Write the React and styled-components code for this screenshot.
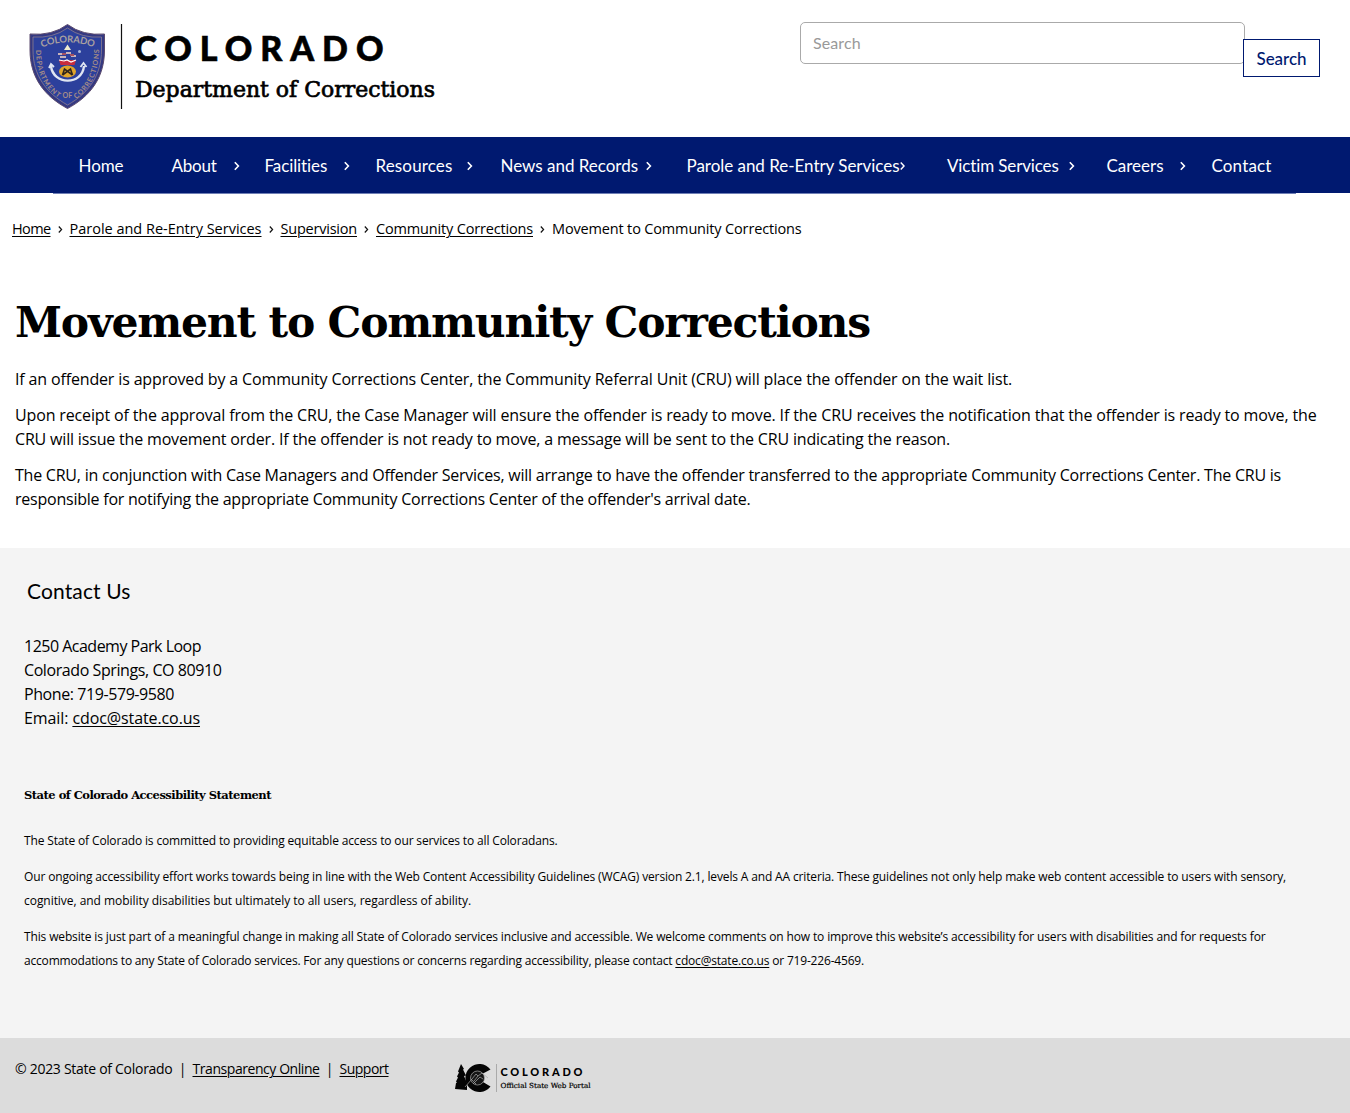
import React, { useLayoutEffect, useRef, useState } from "react";
import styled, { createGlobalStyle } from "styled-components";

const sans = `"Lato", "Open Sans", sans-serif`;
const body = `"Open Sans", "Noto Sans", sans-serif`;
const slab = `"DejaVu Serif", "Liberation Serif", serif`;

const GlobalStyle = createGlobalStyle`
  * { box-sizing: border-box; }
  body { margin: 0; background: #fff; color: #000; font-family: ${body}; font-stretch: 88%; font-size: 16px; line-height: 24px; }
  a { color: inherit; text-underline-offset: 1.5px; text-decoration-thickness: 1px; }
`;

const FitSpan = styled.span`
  display: inline-block;
  white-space: nowrap;
`;

/* Tracks its text so that it sets to a given measure. */
function Fit({ width, children }) {
  const ref = useRef(null);
  const [spacing, setSpacing] = useState(0);
  useLayoutEffect(() => {
    const el = ref.current;
    el.style.letterSpacing = "0px";
    const natural = el.getBoundingClientRect().width;
    setSpacing((width - natural) / el.textContent.length);
  }, [width]);
  return (
    <FitSpan ref={ref} style={{ letterSpacing: `${spacing}px` }}>
      {children}
    </FitSpan>
  );
}

const Page = styled.div`
  display: flex;
  flex-direction: column;
  width: 1350px;
`;

const Header = styled.header`
  display: flex;
  justify-content: space-between;
  height: 137px;
  padding: 22px 30px 0 28px;
`;

const SearchForm = styled.form`
  display: flex;
  align-items: flex-start;
`;

const SearchInput = styled.input`
  width: 445px;
  height: 42px;
  padding: 0 12px 2px;
  border: 1px solid #aaa;
  border-radius: 5px;
  background: #fff;
  font: 16px ${sans};
  letter-spacing: 0.1px;
  outline: none;
  &::placeholder { color: #999; opacity: 1; }
`;

const SearchButton = styled.button`
  width: 77px;
  height: 38px;
  margin: 17px 0 0 -2px;
  padding: 0;
  border: 1px solid #001970;
  background: #fff;
  color: #001970;
  font: 500 17px ${sans};
`;

const Nav = styled.nav`
  display: flex;
  height: 56px;
  padding: 2px 0 0 78.5px;
  align-items: center;
  background: #001970;
  color: #fff;
  font-family: ${sans};
  font-size: 17px;
`;

const NavItem = styled.div`
  display: flex;
  align-items: center;
  justify-content: space-between;
  flex: none;
  width: ${(p) => p.$width}px;
  margin-right: ${(p) => p.$gap}px;
  height: 24px;
`;

const NavRule = styled.div`
  width: 1243px;
  height: 1px;
  margin-left: 53px;
  background: #6f7fb5;
`;

const Breadcrumb = styled.div`
  display: flex;
  align-items: center;
  height: 24px;
  margin: 23px 0 0 12px;
  font-size: 14.5px;
`;

const Separator = styled.span`
  display: flex;
  justify-content: center;
  width: 19px;
`;

const Main = styled.main`
  height: 307px;
  padding: 49px 15px 0;
`;

const Title = styled.h1`
  margin: 0 0 13px;
  height: 64px;
  line-height: 64px;
  font-family: ${slab};
  font-stretch: normal;
  font-size: 42.5px;
  font-weight: 700;
`;

const Para = styled.p`
  display: flex;
  flex-direction: column;
  align-items: flex-start;
  margin: 0 0 12px;
`;

const Contact = styled.section`
  height: 490px;
  padding: 28px 24px 0;
  background: #f4f4f4;
`;

const ContactTitle = styled.h2`
  margin: 0 0 28px 3px;
  height: 30px;
  line-height: 30px;
  font-family: ${sans};
  font-size: 21px;
  font-weight: 400;
`;

const Address = styled.address`
  display: flex;
  flex-direction: column;
  align-items: flex-start;
  font-style: normal;
`;

const Statement = styled.div`
  margin-top: 53px;
  font-size: 12px;
`;

const StatementTitle = styled.h3`
  margin: 0 0 22px;
  font-family: ${slab};
  font-stretch: normal;
  font-size: 11.5px;
  line-height: 24px;
  font-weight: 700;
`;

const Bottom = styled.footer`
  display: flex;
  height: 75px;
  padding: 19px 15px 0;
  background: #dcdcdc;
  font-size: 14px;
`;

const Legal = styled.div`
  display: flex;
  width: 439px;
`;

const Pipe = styled.span`
  width: 20px;
  text-align: center;
`;

const PortalLink = styled.div`
  padding-top: 6px;
`;

const Chevron = () => (
  <svg width="6" height="10" viewBox="0 0 6 10" fill="none" stroke="#fff" strokeWidth="1.6">
    <path d="M.8 1.200 4.400 5 .8 8.800" />
  </svg>
);

const CrumbChevron = () => (
  <svg width="5" height="8" viewBox="0 0 5 8" fill="none" stroke="#111" strokeWidth="1.200">
    <path d="M.8 1.500 3.600 4.500 .8 7.500" />
  </svg>
);

const DepartmentLogo = () => (
  <svg width="410" height="90" viewBox="28 22 410 90">
    <defs>
      <path id="shieldTop" d="M42 47.500Q67 37 94 47.500" />
      <path id="shieldLeft" d="M36 50C36 74 45 89 60 99" />
      <path id="shieldRight" d="M76 99C90 89 99 74 99 48" />
    </defs>
    <path d="M30 34Q52 36 67.500 24.500Q83 36 104.500 34V50C104.500 77 91 96 67.500 108.500C44 96 30 77 30 50Z" fill="#343982" stroke="#5b4a6e" strokeWidth="1" />
    <path d="M33 37Q53 38.500 67.500 28Q82 38.500 101.500 37V50C101.500 75 89 93 67.500 105C46 93 33 75 33 50Z" fill="#2c409c" stroke="#8d7d91" strokeWidth=".8" />
    <g fontFamily="Lato, sans-serif" fontSize="9.500" fontWeight="700" fill="#aaa0a0">
      <text textLength="53"><textPath href="#shieldTop">COLORADO</textPath></text>
      <g fontSize="7" fill="#a58c87">
        <text textLength="55"><textPath href="#shieldLeft">DEPARTMENT</textPath></text>
        <text textLength="57"><textPath href="#shieldRight">CORRECTIONS</textPath></text>
        <text x="62.500" y="98">OF</text>
      </g>
    </g>
    <path d="M51 66C53 85 82 86 84 66" fill="none" stroke="#dfe5f2" strokeWidth="2.400" />
    <path d="M49 68l2-4 3 3M86.500 67l-3-4-3 4" fill="none" stroke="#dfe5f2" strokeWidth="1.800" />
    <ellipse cx="67.500" cy="71.500" rx="8.500" ry="6" fill="#e0a52b" />
    <path d="M62.500 75l8-6 2 6M72.500 75l-8-6-2 6" stroke="#30251d" strokeWidth="1.600" fill="none" />
    <path d="M59 60h17l-1.500 5h-14z" fill="#c92c3d" />
    <path d="M59 60l5 1 3-1 4 2 5-2" fill="none" stroke="#fff" strokeWidth="1.200" />
    <path d="M64 50l3.500-5.500 3.500 5.500z" fill="#f1edcf" />
    <path d="M58 54h5m3-1h5M60 57h6m5-1h5" stroke="#c8b3bb" strokeWidth="1.800" />
    <path d="M62 54h4m4 1h4" stroke="#a45061" strokeWidth="1.800" />
    <circle cx="79.500" cy="51.500" r="1.500" fill="#aab9dc" />
    <path d="M121.500 24V109" stroke="#111" strokeWidth="1.200" />
    <text x="134.500" y="61" fontFamily="Lato, sans-serif" fontWeight="900" fontSize="34" stroke="#000" strokeWidth=".6" textLength="249">COLORADO</text>
    <text x="135" y="97" fontFamily={`"DejaVu Serif", serif`} fontStretch="normal" fontSize="22" stroke="#000" strokeWidth=".7" textLength="300" lengthAdjust="spacingAndGlyphs">Department of Corrections</text>
  </svg>
);

const PortalLogo = () => (
  <svg width="138" height="30" viewBox="454 1063 138 30">
    <path d="M461 1064l3 5-1 .5 3 6-2 .5 3 7v7l-12-1 1-6 1-.5-1-1 2-4-1-1 2-4-1-1z" fill="#050505" />
    <path d="M490.500 1069.500A14 14 0 1 0 490.500 1086.500L483 1082A6 6 0 1 1 483 1073.500Z" fill="#050505" />
    <circle cx="477.500" cy="1078" r="7" fill="#161616" stroke="#aaa" strokeWidth=".7" />
    <path d="M465 1087l7-8 4-5 2 2 4-3 6 5M473 1084l7-7 3 2M471 1079l5 5M478 1076l-4 5" fill="none" stroke="#aaa" strokeWidth=".7" />
    <path d="M496.500 1064v28" stroke="#aaa" />
    <text x="500.500" y="1076" fontFamily="Lato, sans-serif" fontWeight="900" fontSize="11" textLength="82">COLORADO</text>
    <text x="500.500" y="1088" fontFamily={`"DejaVu Serif", serif`} fontStretch="normal" fontSize="7" stroke="#000" strokeWidth=".2" textLength="90" lengthAdjust="spacingAndGlyphs">Official State Web Portal</text>
  </svg>
);

const navItems = [
  { label: "Home", text: 45, width: 45, gap: 48 },
  { label: "About", text: 45, width: 68, gap: 25, menu: true },
  { label: "Facilities", text: 63, width: 85, gap: 26, menu: true },
  { label: "Resources", text: 77, width: 97, gap: 28, menu: true },
  { label: "News and Records", text: 137.5, width: 151, gap: 35, menu: true },
  { label: "Parole and Re-Entry Services", text: 213, width: 218.5, gap: 42, menu: true },
  { label: "Victim Services", text: 112, width: 128, gap: 31.5, menu: true },
  { label: "Careers", text: 57, width: 79, gap: 26, menu: true },
  { label: "Contact", text: 60, width: 60, gap: 0 },
];

const crumbs = [
  ["Home", 38.5],
  ["Parole and Re-Entry Services", 192],
  ["Supervision", 76.5],
  ["Community Corrections", 157],
];

export default function App() {
  return (
    <Page>
      <GlobalStyle />
      <Header>
        <DepartmentLogo />
        <SearchForm>
          <SearchInput placeholder="Search" />
          <SearchButton type="button"><Fit width={50}>Search</Fit></SearchButton>
        </SearchForm>
      </Header>
      <Nav>
        {navItems.map((n) => (
          <NavItem key={n.label} $width={n.width} $gap={n.gap}>
            <Fit width={n.text}>{n.label}</Fit>
            {n.menu && <Chevron />}
          </NavItem>
        ))}
      </Nav>
      <NavRule />
      <Breadcrumb>
        {crumbs.map(([label, width]) => (
          <React.Fragment key={label}>
            <Fit width={width}><a href="#">{label}</a></Fit>
            <Separator><CrumbChevron /></Separator>
          </React.Fragment>
        ))}
        <Fit width={249.5}>Movement to Community Corrections</Fit>
      </Breadcrumb>
      <Main>
        <Title><Fit width={855}>Movement to Community Corrections</Fit></Title>
        <Para>
          <Fit width={997}>If an offender is approved by a Community Corrections Center, the Community Referral Unit (CRU) will place the offender on the wait list.</Fit>
        </Para>
        <Para>
          <Fit width={1301.5}>Upon receipt of the approval from the CRU, the Case Manager will ensure the offender is ready to move. If the CRU receives the notification that the offender is ready to move, the</Fit>
          <Fit width={935}>CRU will issue the movement order. If the offender is not ready to move, a message will be sent to the CRU indicating the reason.</Fit>
        </Para>
        <Para>
          <Fit width={1266}>The CRU, in conjunction with Case Managers and Offender Services, will arrange to have the offender transferred to the appropriate Community Corrections Center. The CRU is</Fit>
          <Fit width={735.5}>responsible for notifying the appropriate Community Corrections Center of the offender's arrival date.</Fit>
        </Para>
      </Main>
      <Contact>
        <ContactTitle><Fit width={103.5}>Contact Us</Fit></ContactTitle>
        <Address>
          <Fit width={177}>1250 Academy Park Loop</Fit>
          <Fit width={197.5}>Colorado Springs, CO 80910</Fit>
          <Fit width={150}>Phone: 719-579-9580</Fit>
          <Fit width={176}>Email: <a href="#">cdoc@state.co.us</a></Fit>
        </Address>
        <Statement>
          <StatementTitle><Fit width={247}>State of Colorado Accessibility Statement</Fit></StatementTitle>
          <Para>
            <Fit width={533.5}>The State of Colorado is committed to providing equitable access to our services to all Coloradans.</Fit>
          </Para>
          <Para>
            <Fit width={1262}>Our ongoing accessibility effort works towards being in line with the Web Content Accessibility Guidelines (WCAG) version 2.1, levels A and AA criteria. These guidelines not only help make web content accessible to users with sensory,</Fit>
            <Fit width={447}>cognitive, and mobility disabilities but ultimately to all users, regardless of ability.</Fit>
          </Para>
          <Para>
            <Fit width={1241.5}>This website is just part of a meaningful change in making all State of Colorado services inclusive and accessible. We welcome comments on how to improve this website’s accessibility for users with disabilities and for requests for</Fit>
            <Fit width={840}>accommodations to any State of Colorado services. For any questions or concerns regarding accessibility, please contact <a href="#">cdoc@state.co.us</a> or 719-226-4569.</Fit>
          </Para>
        </Statement>
      </Contact>
      <Bottom>
        <Legal>
          <Fit width={157.5}>© 2023 State of Colorado</Fit>
          <Pipe>|</Pipe>
          <Fit width={127}><a href="#">Transparency Online</a></Fit>
          <Pipe>|</Pipe>
          <Fit width={49}><a href="#">Support</a></Fit>
        </Legal>
        <PortalLink><PortalLogo /></PortalLink>
      </Bottom>
    </Page>
  );
}
